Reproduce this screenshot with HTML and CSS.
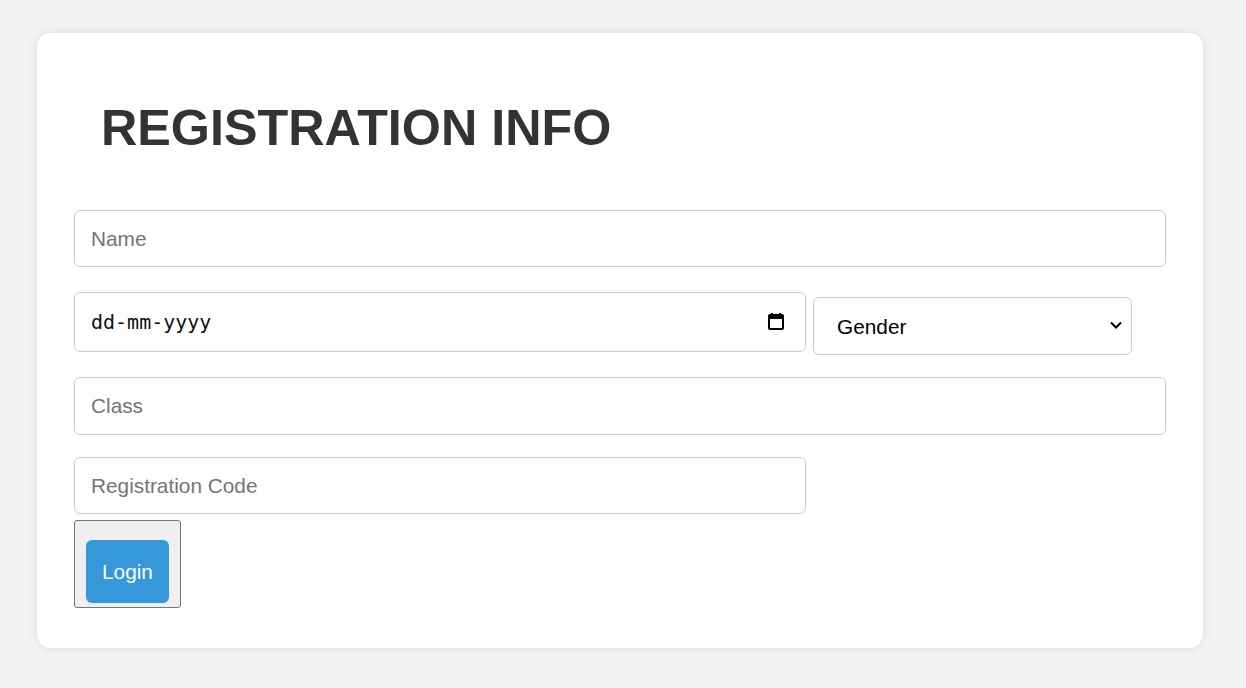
FILE: index.html
```html
<!DOCTYPE html>
<html lang="en">
<head>
<meta charset="utf-8">
<title>Registration Info</title>
<link rel="stylesheet" href="styles.css">
</head>
<body>
<div class="card">
  <h1 class="title">REGISTRATION INFO</h1>
  <form class="form">
    <input class="field full" type="text" placeholder="Name">
    <div class="row">
      <div class="date-box">
        <input class="field date" type="text" placeholder="dd-mm-yyyy">
        <svg class="cal-icon" width="18" height="18" viewBox="0 0 18 18" aria-hidden="true">
          <rect x="2" y="3" width="14" height="14" rx="1" fill="none" stroke="#000" stroke-width="2"/>
          <rect x="2" y="3" width="14" height="4" fill="#000"/>
          <rect x="4" y="1" width="2" height="3" fill="#000"/>
          <rect x="12" y="1" width="2" height="3" fill="#000"/>
        </svg>
      </div>
      <div class="select-box">
        <select class="field gender">
          <option>Gender</option>
          <option>Male</option>
          <option>Female</option>
        </select>
        <svg class="chev" width="14" height="10" viewBox="0 0 14 10" aria-hidden="true">
          <path d="M2 2.5 L7 7.5 L12 2.5" fill="none" stroke="#000" stroke-width="2"/>
        </svg>
      </div>
    </div>
    <input class="field full class-field" type="text" placeholder="Class">
    <input class="field code" type="text" placeholder="Registration Code">
    <div class="login-wrap">
      <button class="login" type="button">Login</button>
    </div>
  </form>
</div>
</body>
</html>
```

FILE: styles.css
```css
html, body {
  margin: 0;
  padding: 0;
}
body {
  background: #f4f4f4;
  font-family: "Liberation Sans", Arial, sans-serif;
  padding: 33px 43px 40px 37px;
}
.card {
  background: #ffffff;
  border-radius: 14px;
  box-shadow: 0 0 12px rgba(0, 0, 0, 0.1);
  padding: 55px 37px 40px 37px;
}
.title {
  margin: 0 0 42px 27px;
  font-size: 50.3px;
  line-height: 80px;
  font-weight: bold;
  color: #333333;
}
.form {
  display: flex;
  flex-direction: column;
  align-items: flex-start;
}
.field {
  box-sizing: border-box;
  height: 57px;
  border: 1px solid #cccccc;
  border-radius: 6px;
  padding: 0 16px;
  font-family: "Liberation Sans", Arial, sans-serif;
  font-size: 20.8px;
  color: #000;
  background: #fff;
  outline: none;
}
.field::placeholder {
  color: #757575;
}
.full {
  width: 100%;
  margin-bottom: 25px;
}
.class-field {
  height: 58px;
  margin-bottom: 22px;
}
.row {
  display: flex;
  align-items: flex-start;
  gap: 7px;
  width: 100%;
  margin-bottom: 22px;
}
.date-box {
  position: relative;
  width: 732px;
}
.date {
  width: 100%;
  height: 60px;
  font-family: "DejaVu Sans Mono", "Liberation Mono", monospace;
  font-size: 20px;
}
.date::placeholder {
  color: #111;
}
.cal-icon {
  position: absolute;
  right: 21px;
  top: 20px;
}
.select-box {
  position: relative;
  width: 319px;
  margin-top: 5px;
}
.gender {
  width: 100%;
  height: 58px;
  padding-left: 23px;
  padding-right: 40px;
  appearance: none;
  -webkit-appearance: none;
}
.chev {
  position: absolute;
  right: 9px;
  top: 23px;
  pointer-events: none;
}
.code {
  width: 732px;
  margin-bottom: 6px;
}
.login-wrap {
  box-sizing: border-box;
  width: 107px;
  height: 88px;
  background: #efefef;
  border: 1px solid #767676;
  border-radius: 3px;
  padding: 19px 11px 4px 11px;
}
.login {
  width: 83px;
  height: 63px;
  border: none;
  border-radius: 6px;
  background: #3498db;
  color: #ffffff;
  font-family: "Liberation Sans", Arial, sans-serif;
  font-size: 20.8px;
  padding: 0;
}
```
